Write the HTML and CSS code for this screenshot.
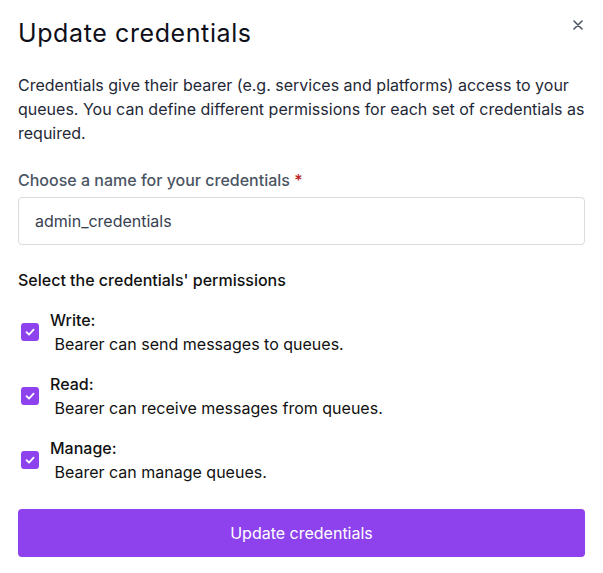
FILE: index.html
```html
<!DOCTYPE html>
<html>
<head>
<meta charset="utf-8">
<link rel="stylesheet" href="styles.css">
</head>
<body>
<div class="modal">
  <div class="header">
    <h1 class="title">Update credentials</h1>
    <button class="close" aria-label="Close">
      <svg width="10" height="10" viewBox="0 0 10 10"><path d="M1 1L9 9M9 1L1 9" stroke="#4b5563" stroke-width="1.6" stroke-linecap="round"/></svg>
    </button>
  </div>
  <p class="desc">Credentials give their bearer (e.g. services and platforms) access to your queues. You can define different permissions for each set of credentials as required.</p>
  <label class="label">Choose a name for your credentials <span class="req">*</span></label>
  <div class="input">admin_credentials</div>
  <div class="section">Select the credentials' permissions</div>
  <div class="perms">
    <div class="perm">
      <span class="cb"><svg width="12" height="12" viewBox="0 0 12 12"><path d="M2.5 6.2L5 8.6L9.6 3.6" fill="none" stroke="#fff" stroke-width="1.8" stroke-linecap="round" stroke-linejoin="round"/></svg></span>
      <div class="ptext"><div class="pname">Write:</div><div class="pdesc">&nbsp;Bearer can send messages to queues.</div></div>
    </div>
    <div class="perm">
      <span class="cb"><svg width="12" height="12" viewBox="0 0 12 12"><path d="M2.5 6.2L5 8.6L9.6 3.6" fill="none" stroke="#fff" stroke-width="1.8" stroke-linecap="round" stroke-linejoin="round"/></svg></span>
      <div class="ptext"><div class="pname">Read:</div><div class="pdesc">&nbsp;Bearer can receive messages from queues.</div></div>
    </div>
    <div class="perm">
      <span class="cb"><svg width="12" height="12" viewBox="0 0 12 12"><path d="M2.5 6.2L5 8.6L9.6 3.6" fill="none" stroke="#fff" stroke-width="1.8" stroke-linecap="round" stroke-linejoin="round"/></svg></span>
      <div class="ptext"><div class="pname">Manage:</div><div class="pdesc">&nbsp;Bearer can manage queues.</div></div>
    </div>
  </div>
  <button class="submit">Update credentials</button>
</div>
</body>
</html>
```
FILE: styles.css
```css
* { box-sizing: border-box; }
html, body { margin: 0; padding: 0; background: #fff; }
body { font-family: Inter, "Noto Sans", sans-serif; color: #111827; }
.modal { padding: 14px 18px 0 18px; width: 603px; }
.header { display: flex; justify-content: space-between; align-items: flex-start; }
.title { margin: 0; font-size: 25px; font-weight: 400; line-height: 38px; letter-spacing: 0.6px; color: #0f0f1a; }
.close { border: 0; background: none; padding: 0; margin: 6px 2px 0 0; width: 10px; height: 10px; display: flex; }
.desc { margin: 21px 0 0 0; font-size: 16px; line-height: 24px; color: #1f2937; }
.label { display: block; margin-top: 23px; font-size: 16px; line-height: 24px; font-weight: 500; color: #4b5563; }
.req { color: #b91c1c; }
.input { margin-top: 5px; height: 48px; border: 1px solid #d8dbe0; border-radius: 4px; padding: 0 16px; display: flex; align-items: center; font-size: 16px; color: #374151; }
.section { margin-top: 23px; font-size: 16px; line-height: 24px; font-weight: 500; color: #111; }
.perms { margin-top: 16px; display: flex; flex-direction: column; gap: 16px; }
.perm { display: flex; align-items: center; gap: 11px; }
.cb { width: 18px; height: 18px; margin-left: 3px; border-radius: 3px; background: #8e42ee; display: flex; align-items: center; justify-content: center; }
.ptext { font-size: 16px; line-height: 24px; }
.pname { font-weight: 500; color: #111; }
.pdesc { color: #111; }
.submit { margin-top: 25px; width: 100%; height: 48px; border: 0; border-radius: 4px; background: #8e42ee; color: #fff; font-family: Inter, sans-serif; font-size: 16px; font-weight: 400; }
```
